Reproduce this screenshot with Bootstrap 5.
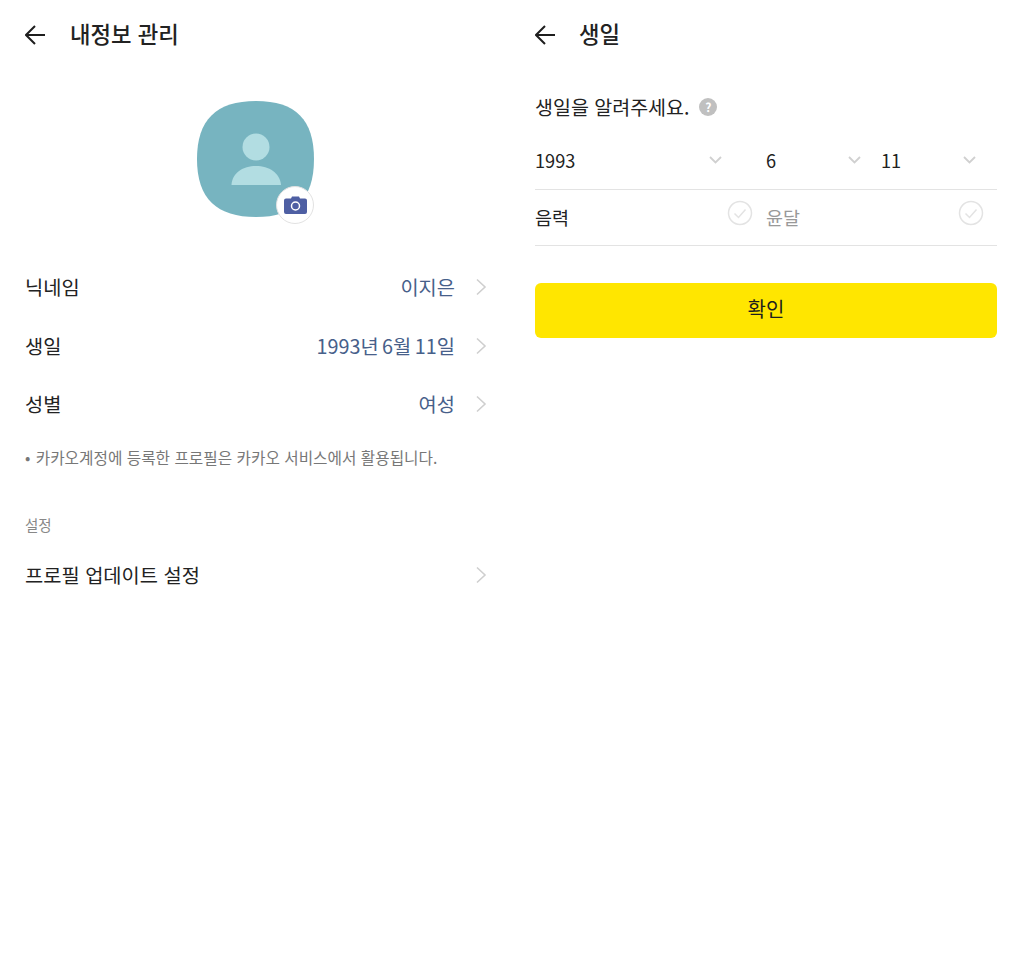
<!DOCTYPE html>
<html lang="ko">
<head>
<meta charset="utf-8">
<title>내정보 관리</title>
<link href="https://cdn.jsdelivr.net/npm/bootstrap@5.3.0/dist/css/bootstrap.min.css" rel="stylesheet">
<style>
body{font-family:"Noto Sans CJK KR","Noto Sans",sans-serif;background:#fff;color:#222;font-weight:400;width:1020px;height:960px;overflow:hidden}
.pane{width:510px;flex:none}
.pane-l{padding:0 23px 0 25px}
.pane-r{padding:0 23px 0 25px}
.topbar{height:70px;gap:25px}
.pane-r .topbar{gap:24px}
.topbar-title{font-size:22.3px;font-weight:500;line-height:30px;color:#222;padding-bottom:4px}
.back{width:20px;height:20px;flex:none}
.pic-wrap{width:118px;height:118px;margin:30px auto 0}
.cam{right:1px;bottom:-6px;width:38px;height:38px;background:#fff;border:1px solid #e2e2e2}
.inforow{height:58.5px;font-size:19.8px;line-height:28px}
.infoval{color:#47608a}
.dateval{word-spacing:-2px}
.chev{width:12px;height:18px;margin:0 0 0 20px;flex:none}
.rows2 .chev{margin-left:0}
.rows{margin-top:40px}
.notice{font-size:15.7px;line-height:22px;color:#777;margin-top:13px}
.bullet{margin-right:1px}
.sect{font-size:14.5px;line-height:20px;color:#888;margin-top:46px}
.rows2{margin-top:11px}
.q{font-size:19.5px;line-height:28px;margin-top:23px}
.help{width:18px;height:18px;background:#c0c0c0;color:#fff;font-size:12px;font-weight:700;line-height:18px;margin-left:10px}
.selrow{height:58px;font-size:18.2px;border-bottom:1px solid #e3e3e3;margin-top:11px}
.checkrow{height:56px;font-size:18.5px;border-bottom:1px solid #e3e3e3}
.fy{width:231px}
.fm{width:115px}
.fd{width:116px}
.sel-chev{width:13px;height:8px;margin-right:20px}
.fy .sel-chev{margin-right:44px}
.fd .sel-chev{margin-right:21px}
.ic-check{width:26px;height:26px;margin-top:-9px}
.cell-l{width:231px;padding-right:13px}
.cell-r{width:231px;padding-right:13px}
.muted-cell{color:#999}
.okbtn{height:55px;background:#ffe600;border:0;border-radius:6px;font-size:20px;font-weight:400;color:#1e1e1e;margin-top:37px;padding-bottom:10px}
.okbtn:hover{background:#ffe600;color:#1e1e1e}
</style>
</head>
<body>
<div class="d-flex">
  <section class="pane pane-l">
    <header class="topbar d-flex align-items-center">
      <svg class="back" viewBox="0 0 20 20" fill="none" stroke="#1e1e1e" stroke-width="2"><path d="M10 1 1 10l9 9M1 10h19"/></svg>
      <div class="topbar-title">내정보 관리</div>
    </header>
    <div class="pic-wrap position-relative">
      <svg width="118" height="118" viewBox="0 0 118 118" class="d-block"><path fill="#77b4c0" d="M59 1C99 1 117 20 117 59C117 99 98 117 59 117C20 117 0 99 0 59C0 20 19 1 59 1Z"/><circle cx="59" cy="47" r="13.500" fill="#b2dde2"/><path fill="#b2dde2" d="M34.500 85C35 73 46 66 59 66S83 73 84 85Z"/></svg>
      <div class="cam position-absolute rounded-circle d-flex align-items-center justify-content-center">
        <svg width="23" height="18" viewBox="0 0 23 18"><path fill="#4e5fa3" d="M2 2.500h5L8 .5h7l1 2h5a2 2 0 0 1 2 2V16a2 2 0 0 1-2 2H2a2 2 0 0 1-2-2V4.500a2 2 0 0 1 2-2Z"/><circle cx="11.500" cy="10" r="4" fill="none" stroke="#fff" stroke-width="1.500"/></svg>
      </div>
    </div>
    <div class="rows">
      <div class="inforow d-flex align-items-center justify-content-between"><span>닉네임</span><span class="d-flex align-items-center"><span class="infoval">이지은</span><svg class="chev" viewBox="0 0 12 18" fill="none" stroke="#cfcfcf" stroke-width="1.600"><path d="M2 1.500 10 9l-8 7.500"/></svg></span></div>
      <div class="inforow d-flex align-items-center justify-content-between"><span>생일</span><span class="d-flex align-items-center"><span class="infoval dateval">1993년 6월 11일</span><svg class="chev" viewBox="0 0 12 18" fill="none" stroke="#cfcfcf" stroke-width="1.600"><path d="M2 1.500 10 9l-8 7.500"/></svg></span></div>
      <div class="inforow d-flex align-items-center justify-content-between"><span>성별</span><span class="d-flex align-items-center"><span class="infoval">여성</span><svg class="chev" viewBox="0 0 12 18" fill="none" stroke="#cfcfcf" stroke-width="1.600"><path d="M2 1.500 10 9l-8 7.500"/></svg></span></div>
    </div>
    <p class="notice mb-0"><span class="bullet">•</span> 카카오계정에 등록한 프로필은 카카오 서비스에서 활용됩니다.</p>
    <div class="sect">설정</div>
    <div class="rows2 inforow d-flex align-items-center justify-content-between"><span>프로필 업데이트 설정</span><svg class="chev" viewBox="0 0 12 18" fill="none" stroke="#cfcfcf" stroke-width="1.600"><path d="M2 1.500 10 9l-8 7.500"/></svg></div>
  </section>
  <section class="pane pane-r">
    <header class="topbar d-flex align-items-center">
      <svg class="back" viewBox="0 0 20 20" fill="none" stroke="#1e1e1e" stroke-width="2"><path d="M10 1 1 10l9 9M1 10h19"/></svg>
      <div class="topbar-title">생일</div>
    </header>
    <div class="q d-flex align-items-center">생일을 알려주세요.<span class="help rounded-circle text-center">?</span></div>
    <div class="selrow d-flex align-items-center">
      <div class="fy d-flex align-items-center justify-content-between"><span>1993</span><svg class="sel-chev" viewBox="0 0 13 8" fill="none" stroke="#d0d0d0" stroke-width="1.800"><path d="M1 1l5.500 5.500L12 1"/></svg></div>
      <div class="fm d-flex align-items-center justify-content-between"><span>6</span><svg class="sel-chev" viewBox="0 0 13 8" fill="none" stroke="#d0d0d0" stroke-width="1.800"><path d="M1 1l5.500 5.500L12 1"/></svg></div>
      <div class="fd d-flex align-items-center justify-content-between"><span>11</span><svg class="sel-chev" viewBox="0 0 13 8" fill="none" stroke="#d0d0d0" stroke-width="1.800"><path d="M1 1l5.500 5.500L12 1"/></svg></div>
    </div>
    <div class="checkrow d-flex align-items-center">
      <div class="cell-l d-flex align-items-center justify-content-between"><span>음력</span><svg class="ic-check" viewBox="0 0 26 26" fill="none" stroke="#e3e3e3" stroke-width="1.500"><circle cx="13" cy="13" r="11.500"/><path d="M7.500 13.500 11.500 17.500 18.500 9.500"/></svg></div>
      <div class="cell-r d-flex align-items-center justify-content-between"><span class="muted-cell">윤달</span><svg class="ic-check" viewBox="0 0 26 26" fill="none" stroke="#e3e3e3" stroke-width="1.500"><circle cx="13" cy="13" r="11.500"/><path d="M7.500 13.500 11.500 17.500 18.500 9.500"/></svg></div>
    </div>
    <button type="button" class="okbtn btn w-100">확인</button>
  </section>
</div>
<script src="https://cdn.jsdelivr.net/npm/bootstrap@5.3.0/dist/js/bootstrap.bundle.min.js"></script>
</body>
</html>
